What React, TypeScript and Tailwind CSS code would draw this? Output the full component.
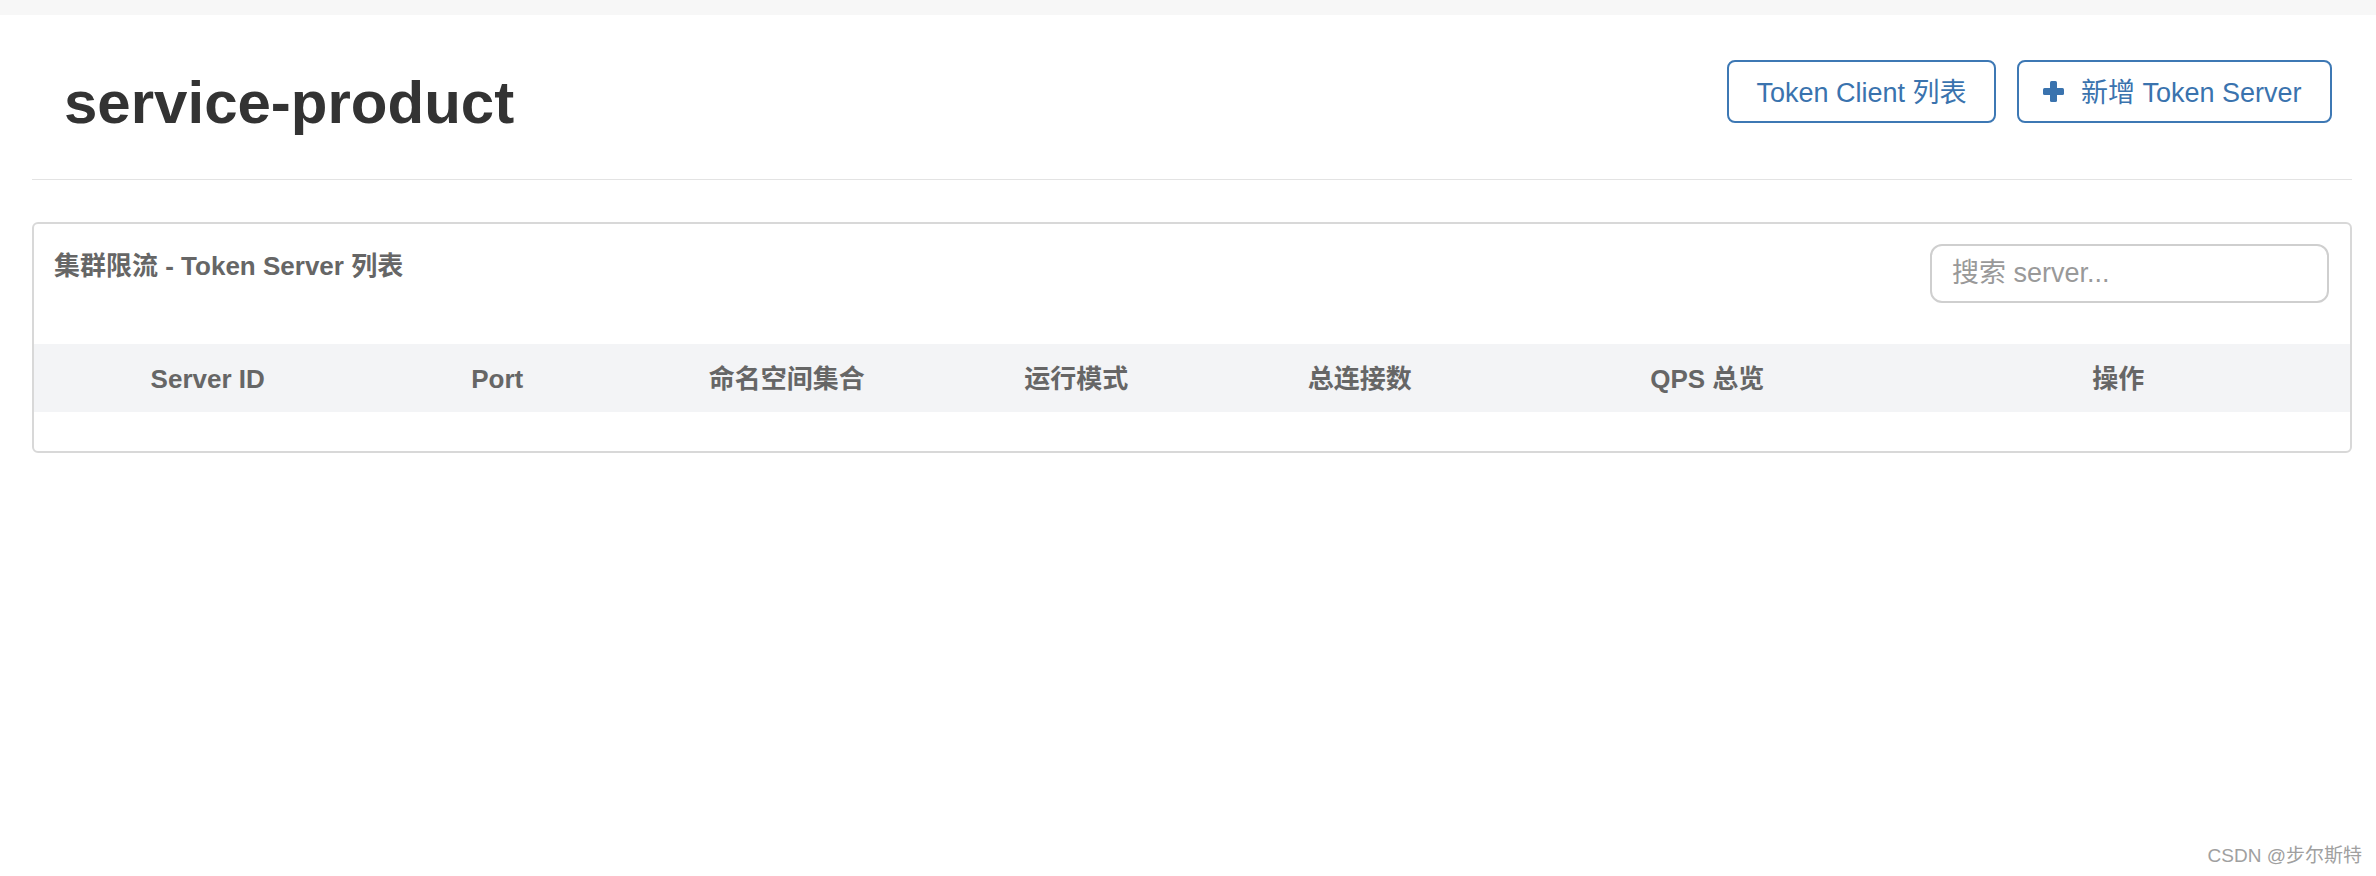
const columns = [
  { label: 'Server ID', width: 'w-[15%]' },
  { label: 'Port', width: 'w-[10%]' },
  { label: '命名空间集合', width: 'w-[15%]' },
  { label: '运行模式', width: 'w-[10%]' },
  { label: '总连接数', width: 'w-[14.5%]' },
  { label: 'QPS 总览', width: 'w-[15.5%]' },
  { label: '操作', width: 'w-[20%]' },
]

function PlusIcon() {
  return (
    <svg width="21" height="21" viewBox="0 0 21 21" className="shrink-0">
      <rect x="7" y="0" width="7" height="21" rx="1.5" fill="currentColor" />
      <rect x="0" y="7" width="21" height="7" rx="1.5" fill="currentColor" />
    </svg>
  )
}

export default function App() {
  return (
    <div className="relative min-h-[876px] bg-white font-['Liberation_Sans','Noto_Sans_CJK_SC',sans-serif]">
      <div className="h-[15px] bg-[#f7f7f7]" />

      <div className="pl-8 pr-6">
        {/* page header */}
        <div className="flex h-[165px] items-start justify-between border-b border-[#e3e3e3] pl-8 pr-[20px]">
          <h1 className="mt-[58px] text-[60px] font-bold leading-none text-[#333]">service-product</h1>
          <div className="mt-[45px] flex gap-[21px]">
            <button className="flex h-[63px] w-[269px] items-center justify-center rounded-lg border-2 border-[#3d78b4] pt-[4px] text-[27px] text-[#3a73ae]">
              Token Client 列表
            </button>
            <button className="flex h-[63px] w-[315px] items-center gap-[17px] rounded-lg border-2 border-[#3d78b4] pl-[24px] text-[27px] text-[#3a73ae]">
              <PlusIcon />
              <span className="pt-[4px]">新增 Token Server</span>
            </button>
          </div>
        </div>

        {/* server list panel */}
        <div className="mt-[42px] rounded-md border-2 border-[#d8d8d8]">
          <div className="flex items-start justify-between pl-[20px] pr-[21px] pt-[20px]">
            <h3 className="mt-[9px] text-[26px] font-bold leading-none text-[#666]">集群限流 - Token Server 列表</h3>
            <input
              className="h-[59px] w-[399px] rounded-xl border-2 border-[#cfcfcf] px-5 text-[27px] text-[#555] placeholder:text-[#999] outline-none"
              placeholder="搜索 server..."
            />
          </div>

          <table className="mt-[41px] mb-[39px] w-full table-fixed">
            <thead>
              <tr className="h-[68px] bg-[#f3f4f6]">
                {columns.map((c) => (
                  <th key={c.label} className={`${c.width} pt-[2px] text-center text-[26px] font-bold text-[#666]`}>
                    {c.label}
                  </th>
                ))}
              </tr>
            </thead>
          </table>
        </div>
      </div>

      <div className="absolute bottom-[6px] right-[14px] text-[19px] text-[#a0a0a0]">CSDN @步尔斯特</div>
    </div>
  )
}
